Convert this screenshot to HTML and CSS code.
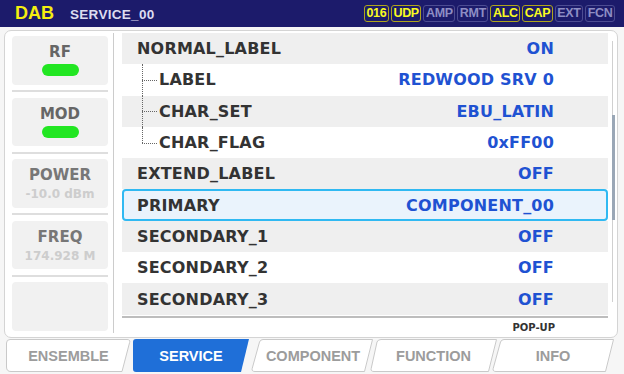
FILE: index.html
```html
<!DOCTYPE html>
<html lang="en">
<head>
    <meta charset="UTF-8">
    <title>DAB - SERVICE_00</title>
    <link rel="stylesheet" href="styles.css">
</head>
<body>

    <!-- top status bar -->
    <header class="topbar">
        <span class="mode">DAB</span>
        <span class="page-name">SERVICE_00</span>
        <div class="badges">
            <span class="badge on">016</span>
            <span class="badge on">UDP</span>
            <span class="badge">AMP</span>
            <span class="badge">RMT</span>
            <span class="badge on">ALC</span>
            <span class="badge on">CAP</span>
            <span class="badge">EXT</span>
            <span class="badge">FCN</span>
        </div>
    </header>

    <div class="frame">
        <!-- left status column -->
        <aside class="status">
            <div class="cell">
                <div class="cell-label">RF</div>
                <div class="led"></div>
            </div>
            <div class="sep"></div>
            <div class="cell">
                <div class="cell-label">MOD</div>
                <div class="led"></div>
            </div>
            <div class="sep"></div>
            <div class="cell dim">
                <div class="cell-label">POWER</div>
                <div class="cell-value">-10.0 dBm</div>
            </div>
            <div class="sep"></div>
            <div class="cell dim">
                <div class="cell-label">FREQ</div>
                <div class="cell-value">174.928 M</div>
            </div>
            <div class="sep"></div>
            <div class="cell"></div>
        </aside>

        <!-- parameter list -->
        <section class="list">
            <div class="rows">
                <div class="row shade"><span class="key">NORMAL_LABEL</span><span class="val">ON</span></div>
                <div class="row sub"><span class="tree"></span><span class="key">LABEL</span><span class="val">REDWOOD SRV 0</span></div>
                <div class="row sub shade"><span class="tree"></span><span class="key">CHAR_SET</span><span class="val">EBU_LATIN</span></div>
                <div class="row sub"><span class="tree last"></span><span class="key">CHAR_FLAG</span><span class="val">0xFF00</span></div>
                <div class="row shade"><span class="key">EXTEND_LABEL</span><span class="val">OFF</span></div>
                <div class="row selected"><span class="key">PRIMARY</span><span class="val">COMPONENT_00</span></div>
                <div class="row shade"><span class="key">SECONDARY_1</span><span class="val">OFF</span></div>
                <div class="row"><span class="key">SECONDARY_2</span><span class="val">OFF</span></div>
                <div class="row shade"><span class="key">SECONDARY_3</span><span class="val">OFF</span></div>
                <div class="rows-end"></div>
                <div class="hint">POP-UP</div>
            </div>
            <div class="scrollbar"><div class="thumb"></div></div>
        </section>
    </div>

    <!-- bottom tabs -->
    <nav class="tabs">
        <div class="tab tab-ensemble">
            <svg class="tab-shape" viewBox="0 0 125 33"><path d="M0.5 4 Q0.5 0.5 4 0.5 H121 Q124.5 0.5 123.6 3.5 L116 32.5 H5 Q0.5 32.5 0.5 28 Z"/></svg>
            <span>ENSEMBLE</span>
        </div>
        <div class="tab tab-service active">
            <svg class="tab-shape" viewBox="0 0 116 33"><path d="M0 3 Q0 0 3 0 H116 L108 33 H3 Q0 33 0 30 Z"/></svg>
            <span>SERVICE</span>
        </div>
        <div class="tab tab-component">
            <svg class="tab-shape" viewBox="0 0 124 33"><path d="M10.5 3 Q11.5 0.5 14 0.5 H123.5 L115.5 32.5 H6 Q2.5 32.5 3.2 29.5 Z"/></svg>
            <span>COMPONENT</span>
        </div>
        <div class="tab tab-function">
            <svg class="tab-shape" viewBox="0 0 127 33"><path d="M7 3 Q8 0.5 11 0.5 H126.5 L118.5 32.5 H4 Q0.5 32.5 1.2 29.5 Z"/></svg>
            <span>FUNCTION</span>
        </div>
        <div class="tab tab-info">
            <svg class="tab-shape" viewBox="0 0 122 33"><path d="M8.5 3 Q9.5 0.5 12 0.5 H121.5 L113.5 32.5 H4 Q0.5 32.5 1.2 29.5 Z"/></svg>
            <span>INFO</span>
        </div>
    </nav>

</body>
</html>
```

FILE: styles.css
```css
* {
    margin: 0;
    padding: 0;
    box-sizing: border-box;
}

html, body {
    width: 624px;
    height: 374px;
    overflow: hidden;
}

body {
    background-color: #f6f6f6;
    font-family: "DejaVu Sans", Verdana, sans-serif;
    font-weight: bold;
}

/* 顶部状态栏 */
.topbar {
    height: 27px;
    display: flex;
    align-items: center;
    padding: 0 9px 0 15px;
    background-color: #1c1b6b;
}

.mode {
    color: #f4ee10;
    font-family: "Liberation Sans", Arial, sans-serif;
    font-size: 18px;
}

.page-name {
    margin-left: 16px;
    margin-top: 2px;
    color: #dcdcf0;
    font-family: "Liberation Sans", Arial, sans-serif;
    font-size: 13.5px;
    letter-spacing: 0.3px;
}

.badges {
    margin-left: auto;
    display: flex;
    gap: 2px;
}

.badge {
    height: 17px;
    line-height: 14px;
    padding: 0 1.5px;
    border: 1.5px solid #4c4c92;
    border-radius: 3px;
    color: #8e8ec4;
    font-family: "Liberation Sans", Arial, sans-serif;
    font-size: 12.5px;
    letter-spacing: -0.3px;
}

.badge.on {
    border-color: #aea41c;
    color: #fafa20;
}

/* 主框架 */
.frame {
    height: 308px;
    margin: 3px 6px 0 4px;
    display: flex;
    background-color: #ffffff;
    border: 1px solid #d4d4d4;
    border-radius: 7px;
}

.status {
    width: 109px;
    margin: 2px 0 4px;
    padding: 3px 5px 0 7px;
    border-right: 1px solid #cccccc;
    display: flex;
    flex-direction: column;
}

.cell {
    height: 48.5px;
    padding-top: 7px;
    display: flex;
    flex-direction: column;
    align-items: center;
    background-color: #f1f1f1;
    border-radius: 4px;
}

.cell-label {
    color: #666666;
    font-size: 15px;
    line-height: 18px;
}

.cell.dim .cell-label {
    color: #777777;
}

.cell-value {
    margin-top: 3px;
    color: #cdcdcd;
    font-size: 12px;
    line-height: 14px;
}

.led {
    width: 37px;
    height: 12px;
    margin-top: 3px;
    border-radius: 6px;
    background-color: #22e622;
}

.sep {
    height: 2px;
    margin: 5.5px 0;
    background-color: #dedede;
}

/* 参数列表 */
.list {
    flex: 1;
    display: flex;
    padding-left: 8px;
}

.rows {
    flex: 1;
    margin-top: 2px;
}

.row {
    height: 31.3px;
    display: flex;
    align-items: center;
    padding: 0 54px 0 15px;
    color: #333333;
    font-size: 16px;
    letter-spacing: 0.2px;
}

.row.shade {
    background-color: #efefef;
}

.row.selected {
    padding-left: 13px;
    padding-right: 52px;
    background-color: #eaf3fc;
    border: 2px solid #30b9f2;
    border-radius: 4px;
}

.row.sub {
    padding-left: 20px;
}

.val {
    margin-left: auto;
    color: #1f52d2;
}

/* 树形虚线 */
.tree {
    align-self: stretch;
    width: 17px;
    position: relative;
}

.tree::before {
    content: "";
    position: absolute;
    left: 0;
    top: 0;
    bottom: 0;
    border-left: 1px dotted #666666;
}

.tree.last::before {
    bottom: 50%;
}

.tree::after {
    content: "";
    position: absolute;
    left: 0;
    top: 50%;
    width: 15px;
    border-top: 1px dotted #666666;
}

.rows-end {
    height: 2px;
    margin-top: 1px;
    background-color: #bdbdbd;
}

.hint {
    margin-top: 4px;
    padding-right: 53px;
    text-align: right;
    color: #333333;
    font-size: 10px;
    line-height: 12px;
}

.scrollbar {
    width: 3px;
    margin: 10px 2px 35px 4px;
    border-left: 1px solid #d0d0d0;
    display: flex;
    flex-direction: column;
}

.thumb {
    width: 3px;
    height: 105px;
    margin-top: 74px;
    margin-left: -1px;
    background-color: #9aa7b6;
}

/* 底部标签 */
.tabs {
    height: 33px;
    margin-top: 1px;
    display: flex;
}

.tab {
    position: relative;
    height: 33px;
    display: flex;
    align-items: center;
    justify-content: center;
    color: #9c9c9c;
    font-family: "Liberation Sans", Arial, sans-serif;
    font-size: 14.5px;
}

.tab span {
    position: relative;
}

.tab-shape {
    position: absolute;
    left: 0;
    top: 0;
    width: 100%;
    height: 100%;
    fill: #ffffff;
    stroke: #c9c9c9;
    stroke-width: 1;
}

.tab.active {
    color: #ffffff;
}

.tab.active .tab-shape {
    fill: #1f6fd8;
    stroke: none;
}

.tab-ensemble { width: 125px; margin-left: 6px; }
.tab-service { width: 116px; margin-left: 2px; }
.tab-component { width: 124px; padding-left: 4px; }
.tab-function { width: 127px; margin-left: -3px; }
.tab-info { width: 122px; margin-left: -5px; }
```
